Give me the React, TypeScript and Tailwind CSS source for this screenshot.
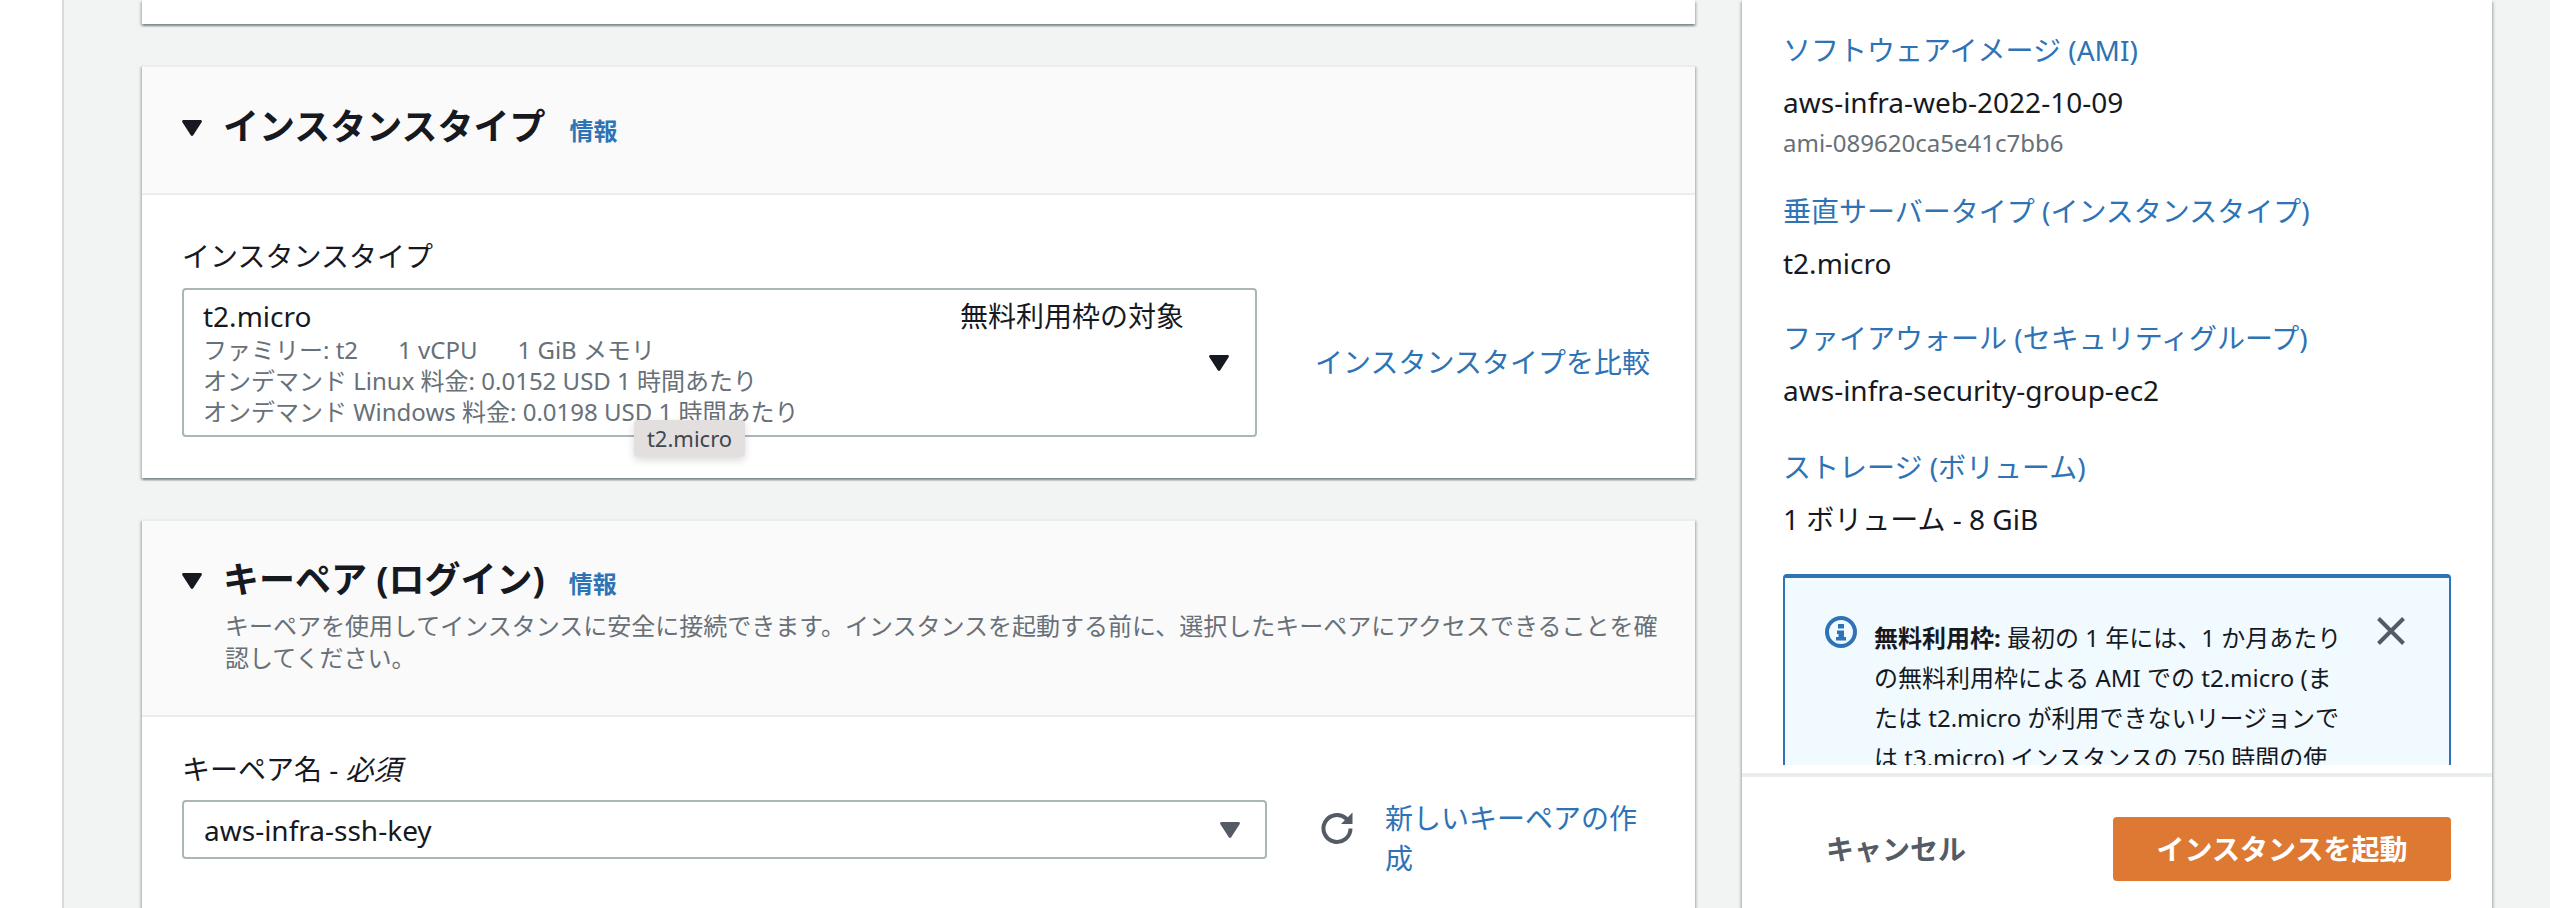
const cardShadow =
  "shadow-[0_2px_2px_0_rgba(0,28,36,0.3),2px_2px_2px_0_rgba(0,28,36,0.15),-2px_2px_2px_0_rgba(0,28,36,0.15)]";

function Caret({ className }: { className: string }) {
  return (
    <svg viewBox="0 0 20 16" className={className} fill="currentColor">
      <path d="M1.5 0h17c1.2 0 1.8 1.2 1.1 2.2L11.2 15.2c-.6.9-1.8.9-2.4 0L.4 2.2C-.3 1.2.3 0 1.5 0z" />
    </svg>
  );
}

function RefreshIcon() {
  return (
    <svg viewBox="0 0 32 32" className="w-[32px] h-[33px] text-[#545b64]" fill="none" stroke="currentColor">
      <path d="M29.5 16a13.5 13.5 0 1 1-4.4-10L29 10" strokeWidth="4" />
      <path d="M20 11.5h11.5V0z" fill="currentColor" stroke="none" />
    </svg>
  );
}

function InfoIcon() {
  return (
    <svg viewBox="0 0 32 32" className="w-[32px] h-[32px] shrink-0 text-[#2d73b6]" fill="currentColor">
      <circle cx="16" cy="16" r="14" fill="none" stroke="currentColor" strokeWidth="4" />
      <rect x="13" y="8" width="6" height="4.5" />
      <path d="M12 14.5h7V21h2v3.5H11V21h2.5v-3H12z" />
    </svg>
  );
}

function CloseIcon() {
  return (
    <svg viewBox="0 0 28 28" className="w-[28px] h-[28px] text-[#545b64]" fill="none" stroke="currentColor" strokeWidth="4">
      <path d="M1.5 1.5l25 25M26.5 1.5l-25 25" />
    </svg>
  );
}

function InfoLink({ className }: { className: string }) {
  return <span className={"text-[24px] leading-[32px] font-semibold text-[#2d73b6] " + className}>情報</span>;
}

function SummaryItem({ title, value, sub, className }: { title: string; value: string; sub?: string; className?: string }) {
  return (
    <div className={className}>
      <div className="text-[28px] leading-[40px] text-[#2d73b6]">{title}</div>
      <div className="mt-[12px] text-[28px] leading-[40px] text-[#16191f]">{value}</div>
      {sub && <div className="mt-[3px] text-[24px] leading-[36px] text-[#687078]">{sub}</div>}
    </div>
  );
}

export default function App() {
  return (
    <div className="w-[2550px] h-[908px] overflow-hidden flex bg-[#f2f3f3] text-[#16191f] font-['Noto_Sans','Noto_Sans_CJK_JP',sans-serif]">
      <div className="w-[64px] h-full bg-white border-r-2 border-[#d5dbdb]" />

      <div className="ml-[78px] w-[1553px] flex flex-col gap-[41px]">
        <div className={"h-[24px] shrink-0 bg-white " + cardShadow} />

        <section className={"relative h-[413px] shrink-0 bg-white " + cardShadow}>
          <div className="h-[130px] bg-[#fafafa] border-t-2 border-b-2 border-[#eaeded] pt-[36px] pl-[40px] flex items-start">
            <Caret className="mt-[17px] w-[20px] h-[16px]" />
            <h2 className="ml-[21px] text-[36px] leading-[48px] font-bold">インスタンスタイプ</h2>
            <InfoLink className="ml-[24px] mt-[12px]" />
          </div>
          <div className="pt-[41px] pl-[40px]">
            <div className="text-[28px] leading-[40px]">インスタンスタイプ</div>
            <div className="mt-[12px] flex items-center">
              <div className="w-[1075px] h-[149px] border-2 border-[#aab7b8] rounded-[4px] bg-white pl-[19px] pr-[26px] flex items-center">
                <div className="flex-1 pr-[25px]">
                  <div className="flex justify-between text-[28px] leading-[36px]">
                    <span>t2.micro</span>
                    <span>無料利用枠の対象</span>
                  </div>
                  <div className="text-[24px] leading-[31px] text-[#687078]">
                    <div className="flex gap-[40px]">
                      <span>ファミリー: t2</span>
                      <span>1 vCPU</span>
                      <span>1 GiB メモリ</span>
                    </div>
                    <div>オンデマンド Linux 料金: 0.0152 USD 1 時間あたり</div>
                    <div>オンデマンド Windows 料金: 0.0198 USD 1 時間あたり</div>
                  </div>
                </div>
                <Caret className="w-[20px] h-[16px]" />
              </div>
              <a className="ml-[58px] -mt-[2px] text-[28px] leading-[40px] text-[#2d73b6]">インスタンスタイプを比較</a>
            </div>
          </div>
          <div className="absolute left-[492px] top-[355px] w-[111px] h-[37px] rounded-[4px] bg-[#e3dfdf] shadow-[0_3px_8px_rgba(0,0,0,0.15)] flex items-center justify-center text-[22px] text-[#3f4650]">
            t2.micro
          </div>
        </section>

        <section className={"flex-1 bg-white " + cardShadow}>
          <div className="h-[198px] bg-[#fafafa] border-t-2 border-b-2 border-[#eaeded] pt-[35px] pl-[40px] pr-[24px]">
            <div className="flex items-start">
              <Caret className="mt-[17px] w-[20px] h-[16px]" />
              <h2 className="ml-[21px] text-[36px] leading-[48px] font-bold">キーペア (ログイン)</h2>
              <InfoLink className="ml-[24px] mt-[12px]" />
            </div>
            <p className="ml-[43px] mt-[6px] text-[24px] leading-[32px] text-[#687078]">
              キーペアを使用してインスタンスに安全に接続できます。インスタンスを起動する前に、選択したキーペアにアクセスできることを確認してください。
            </p>
          </div>
          <div className="pt-[32px] pl-[40px]">
            <div className="text-[28px] leading-[40px]">
              キーペア名 - <i>必須</i>
            </div>
            <div className="mt-[11px] flex items-start">
              <div className="w-[1085px] h-[59px] border-2 border-[#aab7b8] rounded-[4px] bg-white pl-[20px] pr-[25px] flex items-center justify-between">
                <span className="text-[28px] leading-[40px]">aws-infra-ssh-key</span>
                <Caret className="w-[20px] h-[16px] text-[#545b64]" />
              </div>
              <div className="ml-[54px] mt-[12px]">
                <RefreshIcon />
              </div>
              <a className="ml-[32px] -mt-[2px] w-[265px] text-[28px] leading-[40px] text-[#2d73b6]">新しいキーペアの作成</a>
            </div>
          </div>
        </section>
      </div>

      <aside className={"ml-[47px] w-[750px] h-full bg-white flex flex-col " + cardShadow}>
        <div className="h-[765px] shrink-0 overflow-hidden pl-[41px] pr-[41px] pt-[30px]">
          <SummaryItem title="ソフトウェアイメージ (AMI)" value="aws-infra-web-2022-10-09" sub="ami-089620ca5e41c7bb6" />
          <SummaryItem className="mt-[30px]" title="垂直サーバータイプ (インスタンスタイプ)" value="t2.micro" />
          <SummaryItem className="mt-[35px]" title="ファイアウォール (セキュリティグループ)" value="aws-infra-security-group-ec2" />
          <SummaryItem className="mt-[37px]" title="ストレージ (ボリューム)" value="1 ボリューム - 8 GiB" />
          <div className="mt-[35px] w-[668px] border-2 border-t-4 border-[#2d73b6] rounded-[4px] bg-[#f1faff] pt-[38px] pl-[40px] pr-[44px] flex items-start">
            <InfoIcon />
            <p className="ml-[17px] w-[470px] text-[24px] leading-[40px] text-[#16191f] pt-[2px]">
              <b>無料利用枠:</b> 最初の 1 年には、1 か月あたりの無料利用枠による AMI での t2.micro (または t2.micro が利用できないリージョンでは t3.micro) インスタンスの 750 時間の使用が含まれます。
            </p>
            <div className="ml-auto mt-[1px]">
              <CloseIcon />
            </div>
          </div>
        </div>
        <div className="mt-[8px] h-[4px] shrink-0 bg-[#eaeded]" />
        <div className="pt-[40px] pl-[84px] pr-[41px] flex items-start justify-between">
          <span className="mt-[12px] text-[28px] leading-[40px] font-bold text-[#545b64]">キャンセル</span>
          <button className="w-[338px] h-[64px] rounded-[4px] bg-[#de7933] text-white text-[28px] font-bold">インスタンスを起動</button>
        </div>
      </aside>
    </div>
  );
}
